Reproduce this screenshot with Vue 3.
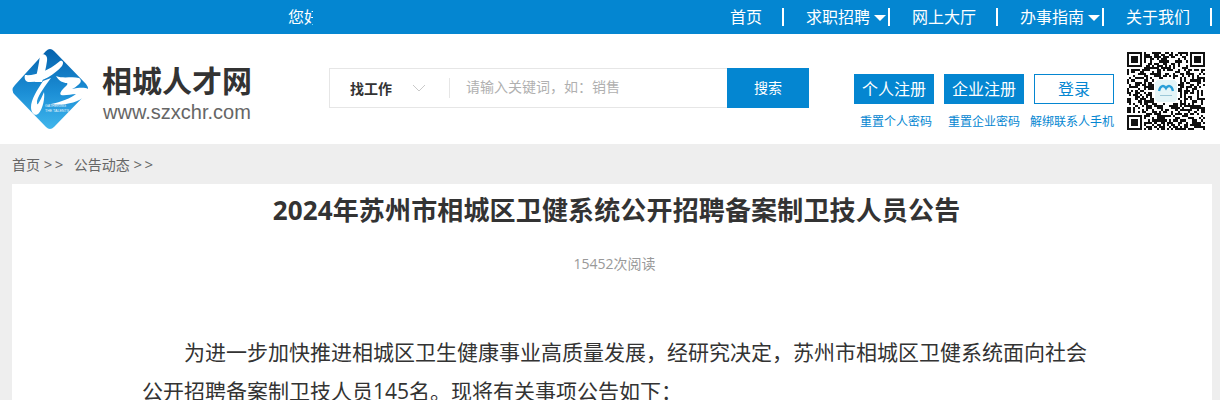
<script setup>
import { computed } from 'vue';

const navs = [
  { text: '首页' },
  { text: '求职招聘', caret: true },
  { text: '网上大厅' },
  { text: '办事指南', caret: true },
  { text: '关于我们' }
];

const SIZE = 37;
const LOGO_FROM = 13;
const LOGO_TO = 23;

// 二维码点阵：定位块固定，其余用伪随机填充
const inFinder = (x, y) => {
  const near = (v) => v < 8;
  const far = (v) => v >= SIZE - 8;
  return (near(x) && near(y)) || (far(x) && near(y)) || (near(x) && far(y));
};

const qrCells = computed(() => {
  const cells = [];
  let seed = 20240;
  for (let y = 0; y < SIZE; y++) {
    for (let x = 0; x < SIZE; x++) {
      seed = (seed * 9301 + 49297) % 233280;
      const inLogo = x >= LOGO_FROM && x <= LOGO_TO && y >= LOGO_FROM && y <= LOGO_TO;
      if (!inFinder(x, y) && !inLogo && seed / 233280 > 0.48) {
        cells.push({ x, y });
      }
    }
  }
  return cells;
});

const finders = [
  { x: 0, y: 0 },
  { x: SIZE - 7, y: 0 },
  { x: 0, y: SIZE - 7 }
];
</script>

<template>
  <div class="page">
    <div class="topbar">
      <div class="hello">您好</div>
      <ul class="nav">
        <li v-for="item in navs" :key="item.text" class="nav-item" :class="{ 'has-caret': item.caret }">
          <span>{{ item.text }}</span>
          <i v-if="item.caret" class="caret"></i>
        </li>
      </ul>
    </div>

    <div class="header">
      <div class="logo">
        <svg class="logo-mark" viewBox="0 0 100 100" width="100" height="100">
          <defs>
            <linearGradient id="logoFill" x1="0" y1="0" x2="0" y2="1">
              <stop offset="0" stop-color="#0562ad" />
              <stop offset="0.55" stop-color="#1c8fd6" />
              <stop offset="1" stop-color="#40b6ec" />
            </linearGradient>
          </defs>
          <path d="M46 11 Q50 7 54 11 L86 44 Q90 49 86 54 L54 87 Q50 91 46 87 L15 55 Q10 50 15 45 Z" fill="url(#logoFill)" />
          <path d="M40 15 C44 13 48 15 47 21 C46 28 44 36 42 42 L35 42 C37 33 39 24 40 15 Z" fill="#fff" />
          <path d="M25 35 C34 36 47 32 60 21 C63 20 64 23 62 26 C54 35 42 43 28 42 C25 41 24 38 25 35 Z" fill="#fff" />
          <path d="M43 41 C37 50 31 60 31 67 C31 74 36 77 39 73 C43 68 45 58 44 52 C42 57 40 61 38 64 C37 65 37 63 37 61 C39 54 45 46 51 38 Z" fill="#fff" />
          <path d="M56 36 C64 39 72 36 79 38 C82 40 81 43 78 45 C76 47 74 48 72 49 C78 48 84 47 88 49 C90 51 89 54 86 56 C76 63 64 66 51 64 C61 62 71 58 76 54 C71 54 65 56 61 55 C59 53 62 50 65 47 C67 45 68 44 67 43 C63 43 59 41 56 36 Z" fill="#fff" />
          <text x="45" y="67" class="logo-en">GATHERING</text>
          <text x="45" y="72" class="logo-en">THE TALENTS</text>
        </svg>
        <div class="logo-text">
          <div class="logo-name">相城人才网</div>
          <div class="logo-url">www.szxchr.com</div>
        </div>
      </div>

      <div class="search">
        <div class="search-type">
          <b>找工作</b>
          <svg width="14" height="8" viewBox="0 0 14 8"><path d="M1 1 L7 7 L13 1" fill="none" stroke="#c9c9c9" stroke-width="1" /></svg>
        </div>
        <div class="search-input">请输入关键词，如：销售</div>
        <div class="search-btn">搜索</div>
      </div>

      <div class="account">
        <div class="account-btns">
          <a class="btn">个人注册</a>
          <a class="btn">企业注册</a>
          <a class="btn btn-line">登录</a>
        </div>
        <div class="account-links">
          <a>重置个人密码</a>
          <a>重置企业密码</a>
          <a>解绑联系人手机</a>
        </div>
      </div>

      <svg class="qr" :viewBox="`0 0 ${SIZE} ${SIZE}`" width="78" height="78" shape-rendering="crispEdges">
        <rect v-for="(c, i) in qrCells" :key="i" :x="c.x" :y="c.y" width="1" height="1" fill="#111" />
        <g v-for="(f, i) in finders" :key="'f' + i">
          <rect :x="f.x" :y="f.y" width="7" height="7" fill="#111" />
          <rect :x="f.x + 1" :y="f.y + 1" width="5" height="5" fill="#fff" />
          <rect :x="f.x + 2" :y="f.y + 2" width="3" height="3" fill="#111" />
        </g>
        <rect x="13.5" y="13.5" width="10" height="10" rx="1" fill="#e4f5f8" />
        <path d="M15.2 18.5 C15.8 15.6 17.6 15.6 18.5 17.2 C19.4 15.6 21.2 15.6 21.8 18.5" fill="none" stroke="#2a9fd8" stroke-width="1.1" shape-rendering="auto" />
        <rect x="15.5" y="20.2" width="6" height="0.7" fill="#9cc8d8" />
      </svg>
    </div>

    <div class="crumb">
      <span>首页 <em>&gt;&gt;</em></span>
      <span>公告动态 <em>&gt;&gt;</em></span>
    </div>

    <div class="article">
      <h1 class="title">2024年苏州市相城区卫健系统公开招聘备案制卫技人员公告</h1>
      <div class="views">15452次阅读</div>
      <div class="content">
        <p>为进一步加快推进相城区卫生健康事业高质量发展，经研究决定，苏州市相城区卫健系统面向社会公开招聘备案制卫技人员145名。现将有关事项公告如下：</p>
      </div>
    </div>
  </div>
</template>

<style scoped>
.page {
  width: 1220px;
  height: 400px;
  overflow: hidden;
  background: #eeeeee;
  font-family: "Open Sans", "Noto Sans CJK SC", sans-serif;
  color: #333;
}

.topbar {
  display: flex;
  height: 34px;
  background: #0486d1;
  color: #fff;
  font-size: 16px;
  line-height: 34px;
}

.hello {
  flex: none;
  width: 25px;
  margin-left: 288px;
  overflow: hidden;
  white-space: nowrap;
}

.nav {
  display: flex;
  flex: none;
  margin: 0 0 0 395px;
  padding: 0;
  list-style: none;
}

.nav-item {
  display: flex;
  align-items: center;
  height: 18px;
  margin-top: 8px;
  padding: 0 20px 0 22px;
  border-right: 2px solid #fff;
  line-height: 18px;
  white-space: nowrap;
}

.nav-item.has-caret {
  padding-right: 2px;
}

.caret {
  width: 0;
  height: 0;
  margin-left: 4px;
  margin-top: 2px;
  border-style: solid;
  border-width: 6px 6.5px 0;
  border-color: #fff transparent transparent;
}

.header {
  display: flex;
  align-items: flex-start;
  height: 110px;
  background: #fff;
}

.logo {
  display: flex;
  flex: none;
  width: 329px;
  padding-top: 6px;
}

.logo-mark {
  flex: none;
}

.logo-en {
  font-family: "Liberation Sans", sans-serif;
  font-size: 3.6px;
  fill: #e8f5fc;
}

.logo-text {
  margin: 23px 0 0 2px;
}

.logo-name {
  font-size: 30px;
  font-weight: 700;
  line-height: 36px;
  color: #333;
}

.logo-url {
  margin: 2px 0 0 1px;
  font-family: "Liberation Sans", sans-serif;
  font-size: 20px;
  line-height: 22px;
  color: #666;
}

.search {
  display: flex;
  flex: none;
  width: 480px;
  height: 40px;
  margin-top: 34px;
  box-sizing: border-box;
  border: 1px solid #e6e6e6;
  border-right: 0;
}

.search-type {
  display: flex;
  align-items: center;
  justify-content: space-between;
  width: 120px;
  height: 20px;
  margin-top: 9px;
  padding: 0 23px 0 20px;
  box-sizing: border-box;
  border-right: 1px solid #e6e6e6;
  font-size: 14px;
}

.search-input {
  flex: 1;
  padding-left: 16px;
  font-size: 14px;
  line-height: 36px;
  color: #b0b0b0;
}

.search-btn {
  width: 82px;
  height: 40px;
  margin: -1px 0;
  background: #0486d1;
  color: #fff;
  font-size: 14px;
  line-height: 40px;
  text-align: center;
}

.account {
  flex: none;
  width: 260px;
  margin: 40px 0 0 45px;
}

.account-btns {
  display: flex;
  gap: 10px;
}

.btn {
  width: 80px;
  height: 30px;
  box-sizing: border-box;
  background: #0486d1;
  color: #fff;
  font-size: 16px;
  line-height: 30px;
  text-align: center;
}

.btn-line {
  border: 1px solid #0486d1;
  background: #fff;
  color: #0486d1;
  line-height: 28px;
}

.account-links {
  display: flex;
  margin-top: 8px;
  padding-left: 6px;
  font-size: 12px;
  line-height: 20px;
  color: #0486d1;
  white-space: nowrap;
}

.account-links a:nth-child(2) {
  margin-left: 16px;
}

.account-links a:nth-child(3) {
  margin-left: 10px;
}

.qr {
  flex: none;
  margin: 18px 0 0 13px;
  filter: blur(0.5px);
}

.crumb {
  display: flex;
  gap: 8px;
  height: 40px;
  padding-left: 12px;
  font-size: 14px;
  line-height: 40px;
  color: #666;
}

.crumb em {
  font-size: 15px;
  font-style: normal;
  letter-spacing: 2.5px;
}

.article {
  width: 1200px;
  height: 216px;
  margin-left: 12px;
  background: #fff;
  overflow: hidden;
}

.title {
  margin: 8px 0 0 9px;
  font-size: 26px;
  font-weight: 700;
  line-height: 36px;
  letter-spacing: 0.15px;
  text-align: center;
  color: #333;
}

.views {
  margin: 26px 0 0 5px;
  font-size: 14px;
  line-height: 20px;
  text-align: center;
  color: #999;
}

.content {
  width: 950px;
  margin: 59px 0 0 130px;
  font-size: 21px;
  line-height: 39px;
  color: #333;
}

.content p {
  margin: 0;
  text-indent: 2em;
}
</style>
